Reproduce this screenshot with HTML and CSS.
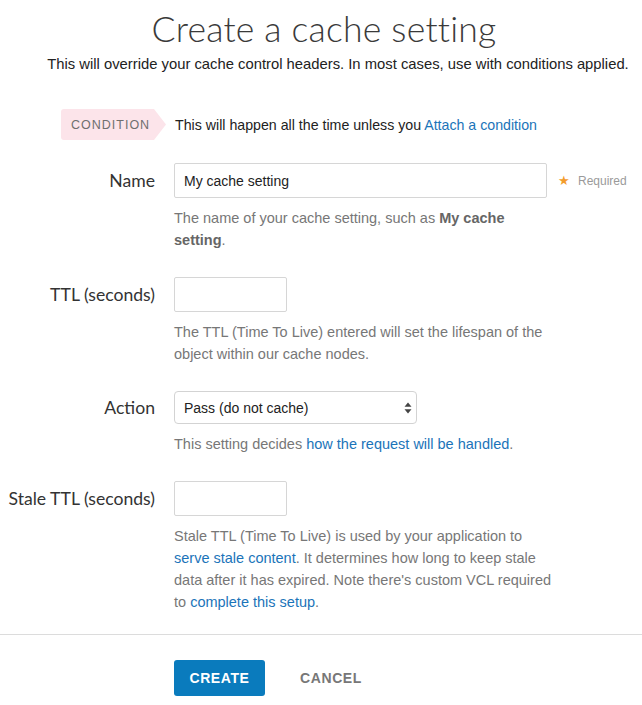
FILE: index.html
```html
<!DOCTYPE html>
<html lang="en">
<head>
  <meta charset="UTF-8" />
  <title>Create a cache setting</title>
  <link rel="stylesheet" href="styles.css">
</head>
<body>
  <div class="page">
    <header class="page-header">
      <h1 class="page-title">Create a cache setting</h1>
      <p class="page-intro">This will override your cache control headers. In most cases, use with conditions applied.</p>
    </header>

    <div class="condition-row">
      <span class="condition-tag">CONDITION</span>
      <span class="condition-text">This will happen all the time unless you <a href="#">Attach a condition</a></span>
    </div>

    <form class="settings-form">
      <div class="field">
        <label class="field-label" for="name">Name</label>
        <input class="text-input text-input-wide" id="name" type="text" value="My cache setting" />
        <span class="field-required"><span class="star">&#9733;</span>Required</span>
        <p class="field-help">The name of your cache setting, such as <strong>My cache setting</strong>.</p>
      </div>

      <div class="field">
        <label class="field-label" for="ttl">TTL (seconds)</label>
        <input class="text-input text-input-short" id="ttl" type="text" />
        <p class="field-help">The TTL (Time To Live) entered will set the lifespan of the object within our cache nodes.</p>
      </div>

      <div class="field">
        <label class="field-label" for="action">Action</label>
        <div class="select-wrap">
          <select class="select-input" id="action">
            <option>Pass (do not cache)</option>
            <option>Deliver</option>
            <option>Restart</option>
          </select>
          <svg class="select-arrows" width="8" height="12" viewBox="0 0 8 12">
            <path d="M4 0.5 L7.5 4.8 L0.5 4.8 Z" fill="#444"/>
            <path d="M4 11.5 L7.5 7.2 L0.5 7.2 Z" fill="#444"/>
          </svg>
        </div>
        <p class="field-help">This setting decides <a href="#">how the request will be handled</a>.</p>
      </div>

      <div class="field field-last">
        <label class="field-label" for="stale">Stale TTL (seconds)</label>
        <input class="text-input text-input-short" id="stale" type="text" />
        <p class="field-help">Stale TTL (Time To Live) is used by your application to <a href="#">serve stale content</a>. It determines how long to keep stale data after it has expired. Note there's custom VCL required to <a href="#">complete this setup</a>.</p>
      </div>
    </form>

    <div class="form-actions">
      <button class="btn btn-primary" type="button">CREATE</button>
      <button class="btn btn-link" type="button">CANCEL</button>
    </div>
  </div>
</body>
</html>
```

FILE: styles.css
```css
* {
  box-sizing: border-box;
  margin: 0;
  padding: 0;
}

html, body {
  background: #fff;
  color: #333;
  font-family: 'Liberation Sans', Arial, sans-serif;
}

a {
  color: #1b74b9;
  text-decoration: none;
}

.page {
  width: 642px;
}

.page-header {
  text-align: center;
  padding-top: 9px;
}

.page-title {
  padding-left: 6px;
  font-family: Lato, 'Open Sans', sans-serif;
  font-weight: 300;
  font-size: 35.6px;
  line-height: 40px;
  color: #3a3a3a;
  letter-spacing: 0.2px;
}

.page-intro {
  margin-top: 6px;
  padding-left: 34px;
  font-size: 14.8px;
  line-height: 18px;
  color: #222;
}

.condition-row {
  display: flex;
  align-items: center;
  gap: 9px;
  margin-top: 36px;
  padding-left: 61px;
}

.condition-tag {
  display: inline-flex;
  align-items: center;
  height: 31px;
  width: 105px;
  padding-left: 10px;
  background: #fce4ea;
  color: #6f6f6f;
  font-size: 12.5px;
  letter-spacing: 1px;
  border-radius: 3px;
  clip-path: polygon(0 0, calc(100% - 12px) 0, 100% 50%, calc(100% - 12px) 100%, 0 100%);
}

.condition-text {
  font-size: 14.2px;
  color: #222;
}

.settings-form {
  margin-top: 23px;
}

.field {
  display: grid;
  grid-template-columns: 155px 373px auto;
  column-gap: 19px;
  align-items: center;
  margin-bottom: 26px;
}

.field-last {
  margin-bottom: 0;
}

.field-label {
  grid-column: 1;
  grid-row: 1;
  text-align: right;
  font-family: Lato, sans-serif;
  font-size: 17.6px;
  color: #333;
}

.text-input {
  grid-column: 2;
  grid-row: 1;
  height: 35px;
  padding: 0 9px;
  border: 1px solid #d6d6d6;
  border-radius: 2px;
  font-family: 'Liberation Sans', Arial, sans-serif;
  font-size: 14px;
  color: #222;
  outline: none;
}

.text-input-wide {
  width: 373px;
}

.text-input-short {
  width: 113px;
}

.field-required {
  grid-column: 3;
  grid-row: 1;
  margin-left: -8px;
  font-size: 12px;
  color: #9a9a9a;
}

.star {
  color: #f39c2c;
  font-size: 13px;
  margin-right: 8px;
}

.select-wrap {
  grid-column: 2;
  grid-row: 1;
  position: relative;
  width: 243px;
}

.select-input {
  appearance: none;
  -webkit-appearance: none;
  width: 243px;
  height: 33px;
  padding: 0 9px;
  border: 1px solid #d3d3d3;
  border-radius: 4px;
  background: #fff;
  font-family: 'Liberation Sans', Arial, sans-serif;
  font-size: 14px;
  color: #222;
  outline: none;
}

.select-arrows {
  position: absolute;
  right: 5px;
  top: 11px;
  pointer-events: none;
}

.field-help {
  grid-column: 2 / 4;
  grid-row: 2;
  max-width: 384px;
  margin-top: 9px;
  font-size: 14.5px;
  line-height: 22px;
  color: #777;
}

.field-help strong {
  color: #666;
}

.form-actions {
  margin-top: 21px;
  border-top: 1px solid #dcdcdc;
  padding: 25px 0 0 174px;
  display: flex;
  gap: 17px;
}

.btn {
  height: 36px;
  border: none;
  border-radius: 3px;
  font-family: 'Liberation Sans', Arial, sans-serif;
  font-weight: bold;
  font-size: 14px;
  letter-spacing: 0.6px;
  cursor: pointer;
}

.btn-primary {
  width: 91px;
  background: #0a7bbd;
  color: #fff;
}

.btn-link {
  padding: 0 18px;
  background: none;
  color: #777;
}
```
